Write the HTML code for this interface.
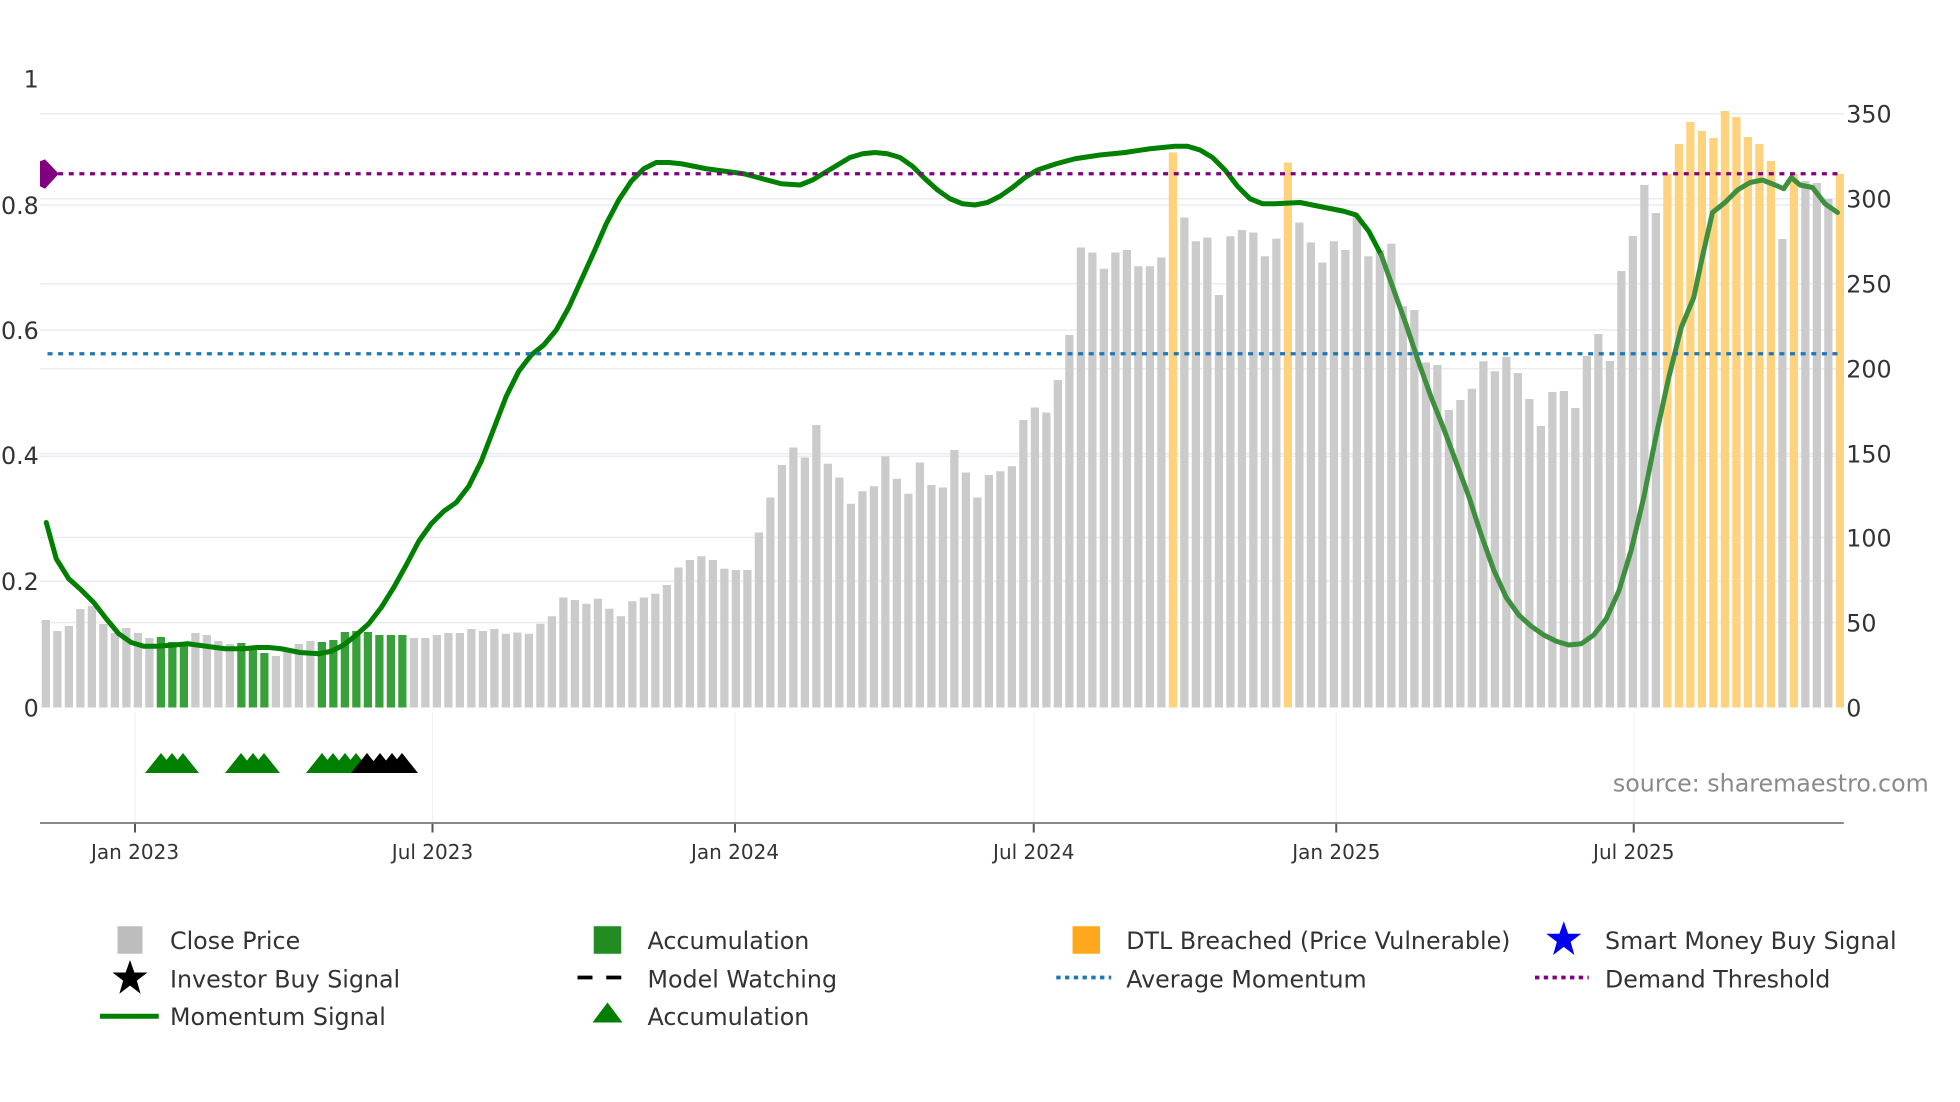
<!DOCTYPE html>
<html><head><meta charset="utf-8"><style>
html,body{margin:0;padding:0;background:#fff;}
svg{display:block;font-family:"DejaVu Sans","Liberation Sans",sans-serif;}
</style></head><body>
<svg width="1960" height="1102" viewBox="0 0 1568 881.6" xmlns="http://www.w3.org/2000/svg">
<g stroke="#e9edf3" stroke-width="1.2">
<line x1="32" x2="1475" y1="91" y2="91"/><line x1="32" x2="1475" y1="159" y2="159"/><line x1="32" x2="1475" y1="227" y2="227"/><line x1="32" x2="1475" y1="295" y2="295"/><line x1="32" x2="1475" y1="363" y2="363"/><line x1="32" x2="1475" y1="430" y2="430"/><line x1="32" x2="1475" y1="498" y2="498"/><line x1="32" x2="1475" y1="465" y2="465"/><line x1="32" x2="1475" y1="365" y2="365"/><line x1="32" x2="1475" y1="264" y2="264"/><line x1="32" x2="1475" y1="164" y2="164"/>
</g>
<g stroke="#eef0f4" stroke-width="1">
<line x1="108" x2="108" y1="570" y2="658"/><line x1="346" x2="346" y1="570" y2="658"/><line x1="588" x2="588" y1="570" y2="658"/><line x1="827" x2="827" y1="570" y2="658"/><line x1="1069" x2="1069" y1="570" y2="658"/><line x1="1307" x2="1307" y1="570" y2="658"/>
</g>
<path fill="#cbcbcb" d="M33.4 566V496h6.6V566zM42.6 566V504.8h6.6V566zM51.8 566V500.8h6.6V566zM61 566V487.2h6.6V566zM70.2 566V484.8h6.6V566zM79.4 566V499.2h6.6V566zM88.6 566V506.4h6.6V566zM97.8 566V502.4h6.6V566zM107 566V506.4h6.6V566zM116.2 566V510.4h6.6V566zM153 566V506.4h6.6V566zM162.2 566V508h6.6V566zM171.4 566V512.8h6.6V566zM180.6 566V515.2h6.6V566zM217.4 566V524.8h6.6V566zM226.6 566V521.6h6.6V566zM235.8 566V515.2h6.6V566zM245 566V512.8h6.6V566zM327.8 566V510.4h6.6V566zM337 566V510.4h6.6V566zM346.2 566V508h6.6V566zM355.4 566V506.4h6.6V566zM364.6 566V506.4h6.6V566zM373.8 566V503.2h6.6V566zM383 566V504.8h6.6V566zM392.2 566V503.2h6.6V566zM401.4 566V507h6.6V566zM410.6 566V506h6.6V566zM419.8 566V507h6.6V566zM429 566V499h6.6V566zM438.2 566V493h6.6V566zM447.4 566V478h6.6V566zM456.6 566V480h6.6V566zM465.8 566V483h6.6V566zM475 566V479h6.6V566zM484.2 566V487h6.6V566zM493.4 566V493h6.6V566zM502.6 566V481h6.6V566zM511.8 566V478h6.6V566zM521 566V475h6.6V566zM530.2 566V468h6.6V566zM539.4 566V454h6.6V566zM548.6 566V448h6.6V566zM557.8 566V445h6.6V566zM567 566V448h6.6V566zM576.2 566V455h6.6V566zM585.4 566V456h6.6V566zM594.6 566V456h6.6V566zM603.8 566V426h6.6V566zM613 566V398h6.6V566zM622.2 566V372h6.6V566zM631.4 566V358h6.6V566zM640.6 566V366h6.6V566zM649.8 566V340h6.6V566zM659 566V371h6.6V566zM668.2 566V382h6.6V566zM677.4 566V403h6.6V566zM686.6 566V393h6.6V566zM695.8 566V389h6.6V566zM705 566V365h6.6V566zM714.2 566V383h6.6V566zM723.4 566V395h6.6V566zM732.6 566V370h6.6V566zM741.8 566V388h6.6V566zM751 566V390h6.6V566zM760.2 566V360h6.6V566zM769.4 566V378h6.6V566zM778.6 566V398h6.6V566zM787.8 566V380h6.6V566zM797 566V377h6.6V566zM806.2 566V373h6.6V566zM815.4 566V336h6.6V566zM824.6 566V326h6.6V566zM833.8 566V330h6.6V566zM843 566V304h6.6V566zM852.2 566V268h6.6V566zM861.4 566V198h6.6V566zM870.6 566V202h6.6V566zM879.8 566V215h6.6V566zM889 566V202h6.6V566zM898.2 566V200h6.6V566zM907.4 566V213h6.6V566zM916.6 566V213h6.6V566zM925.8 566V206h6.6V566zM944.2 566V174h6.6V566zM953.4 566V193h6.6V566zM962.6 566V190h6.6V566zM971.8 566V236h6.6V566zM981 566V189h6.6V566zM990.2 566V184h6.6V566zM999.4 566V186h6.6V566zM1008.6 566V205h6.6V566zM1017.8 566V191h6.6V566zM1036.2 566V178h6.6V566zM1045.4 566V194h6.6V566zM1054.6 566V210h6.6V566zM1063.8 566V193h6.6V566zM1073 566V200h6.6V566zM1082.2 566V173h6.6V566zM1091.4 566V205h6.6V566zM1100.6 566V200h6.6V566zM1109.8 566V195h6.6V566zM1119 566V245h6.6V566zM1128.2 566V248h6.6V566zM1137.4 566V290h6.6V566zM1146.6 566V292h6.6V566zM1155.8 566V328h6.6V566zM1165 566V320h6.6V566zM1174.2 566V311h6.6V566zM1183.4 566V289h6.6V566zM1192.6 566V297h6.6V566zM1201.8 566V285.6h6.6V566zM1211 566V298.4h6.6V566zM1220.2 566V319.2h6.6V566zM1229.4 566V340.8h6.6V566zM1238.6 566V313.6h6.6V566zM1247.8 566V312.8h6.6V566zM1257 566V326.4h6.6V566zM1266.2 566V284.8h6.6V566zM1275.4 566V267.2h6.6V566zM1284.6 566V288.8h6.6V566zM1293.8 566V216.8h6.6V566zM1303 566V188.8h6.6V566zM1312.2 566V148h6.6V566zM1321.4 566V170.4h6.6V566zM1422.6 566V191.2h6.6V566zM1441 566V144.8h6.6V566zM1450.2 566V146.4h6.6V566zM1459.4 566V159.2h6.6V566z"/>
<path fill="#38a038" d="M125.4 566V509.6h6.6V566zM134.6 566V513.6h6.6V566zM143.8 566V515.2h6.6V566zM189.8 566V514.4h6.6V566zM199 566V520h6.6V566zM208.2 566V522.4h6.6V566zM254.2 566V513.6h6.6V566zM263.4 566V512h6.6V566zM272.6 566V505.6h6.6V566zM281.8 566V504.8h6.6V566zM291 566V505.6h6.6V566zM300.2 566V508h6.6V566zM309.4 566V508h6.6V566zM318.6 566V508h6.6V566z"/>
<path fill="#ffd27e" d="M935 566V122h6.6V566zM1027 566V130h6.6V566zM1330.6 566V139.2h6.6V566zM1339.8 566V115.2h6.6V566zM1349 566V97.6h6.6V566zM1358.2 566V104.8h6.6V566zM1367.4 566V110.4h6.6V566zM1376.6 566V88.8h6.6V566zM1385.8 566V93.6h6.6V566zM1395 566V109.6h6.6V566zM1404.2 566V115.2h6.6V566zM1413.4 566V128.8h6.6V566zM1431.8 566V139.2h6.6V566zM1468.6 566V139.2h6.6V566z"/>
<path fill="none" stroke="#008000" stroke-width="4" stroke-linejoin="round" stroke-linecap="round" d="M37,418 L45,447 L55,463 L65,472 L75,482 L85,495 L95,507 L105,514 L115,517 L125,517 L140,516 L150,515 L165,517 L180,519 L195,519 L205,518 L215,518 L225,519 L240,522 L255,523 L265,521 L275,516 L285,508 L295,499 L305,486 L315,470 L325,452 L335,433 L345,419 L355,409 L365,402 L375,389 L385,369 L395,343 L405,317 L415,297 L425,284 L435,276 L445,264 L455,246 L465,224 L475,202 L485,179 L495,160 L505,145 L515,135 L525,130 L535,130 L545,131 L555,133 L565,135 L580,137 L595,139 L610,143 L625,147 L640,148 L650,144 L660,138 L670,132 L680,126 L690,123 L700,122 L710,123 L720,126 L730,133 L740,143 L750,152 L760,159 L770,163 L780,164 L790,162 L800,157 L810,150 L820,142 L830,136 L845,131 L860,127 L880,124 L900,122 L920,119 L940,117 L950,117 L960,120 L970,126 L980,136 L990,149 L1000,159 L1010,163 L1020,163 L1040,162 L1060,166 L1075,169 L1085,172 L1095,185 L1105,204"/>
<path fill="none" stroke="#3e8f3e" stroke-width="4" stroke-linejoin="round" stroke-linecap="round" d="M1105,204 L1115,232 L1125,260 L1135,290 L1145,318 L1155,343 L1165,370 L1175,397 L1185,428 L1195,456 L1205,478 L1215,492 L1225,501 L1235,508 L1245,513 L1255,516 L1265,515 L1275,508 L1285,495 L1295,473 L1305,440 L1315,398 L1325,348 L1335,302 L1345,262 L1355,238 L1362,205 L1370,170 L1380,162 L1390,152 L1400,146 L1410,144 L1420,148 L1427,151 L1433,142 L1440,148 L1450,150 L1460,163 L1470,170"/>
<line x1="38" y1="139" x2="1472" y2="139" stroke="#800080" stroke-width="2.6" stroke-dasharray="4,4.5"/>
<line x1="38" y1="283" x2="1472" y2="283" stroke="#1f77b4" stroke-width="2.6" stroke-dasharray="4,4.5"/>
<polygon points="32,129 36,127.5 47,139 36,151 32,149" fill="#800080"/>
<g fill="#008000">
<polygon points="116,618.4 128.8,602.4 141.6,618.4"/><polygon points="124.8,618.4 137.6,602.4 150.4,618.4"/><polygon points="133.6,618.4 146.4,602.4 159.2,618.4"/>
<polygon points="180,618.4 192.8,602.4 205.6,618.4"/><polygon points="189.6,618.4 202.4,602.4 215.2,618.4"/><polygon points="198.4,618.4 211.2,602.4 224,618.4"/>
<polygon points="244.8,618.4 257.6,602.4 270.4,618.4"/><polygon points="253.6,618.4 266.4,602.4 279.2,618.4"/><polygon points="263.2,618.4 276,602.4 288.8,618.4"/><polygon points="272,618.4 284.8,602.4 297.6,618.4"/>
</g>
<g fill="#000">
<polygon points="280.8,618.4 293.6,602.4 306.4,618.4"/><polygon points="291.2,618.4 304,602.4 316.8,618.4"/><polygon points="300.8,618.4 313.6,602.4 326.4,618.4"/><polygon points="308.8,618.4 321.6,602.4 334.4,618.4"/>
</g>
<line x1="32" y1="658.4" x2="1475" y2="658.4" stroke="#888" stroke-width="1.6"/>
<g stroke="#555" stroke-width="1.6">
<line x1="108" x2="108" y1="659" y2="666"/><line x1="346" x2="346" y1="659" y2="666"/><line x1="588" x2="588" y1="659" y2="666"/><line x1="827" x2="827" y1="659" y2="666"/><line x1="1069" x2="1069" y1="659" y2="666"/><line x1="1307" x2="1307" y1="659" y2="666"/>
</g>
<g fill="#333" font-size="19" text-anchor="end">
<text x="31" y="70">1</text><text x="31" y="171">0.8</text><text x="31" y="271">0.6</text><text x="31" y="371">0.4</text><text x="31" y="472">0.2</text><text x="31" y="573">0</text>
</g>
<g fill="#333" font-size="19">
<text x="1477" y="98">350</text><text x="1477" y="166">300</text><text x="1477" y="234">250</text><text x="1477" y="302">200</text><text x="1477" y="370">150</text><text x="1477" y="437">100</text><text x="1477" y="505">50</text><text x="1477" y="573">0</text>
</g>
<g fill="#333" font-size="16" text-anchor="middle">
<text x="108" y="687">Jan 2023</text><text x="346" y="687">Jul 2023</text><text x="588" y="687">Jan 2024</text><text x="827" y="687">Jul 2024</text><text x="1069" y="687">Jan 2025</text><text x="1307" y="687">Jul 2025</text>
</g>
<text x="1543" y="633" fill="#8a8a8a" font-size="19" text-anchor="end">source: sharemaestro.com</text>
<g font-size="19" fill="#333">
<rect x="94" y="741" width="20" height="22" fill="#bdbdbd"/>
<text x="136" y="759">Close Price</text>
<polygon points="104,768 107.5,778 118,778 109.5,784.5 112.5,795 104,788.5 95.5,795 98.5,784.5 90,778 100.5,778" fill="#000"/>
<text x="136" y="790">Investor Buy Signal</text>
<line x1="80" y1="813" x2="127" y2="813" stroke="#008000" stroke-width="4"/>
<text x="136" y="820">Momentum Signal</text>
<rect x="475" y="741" width="22" height="22" fill="#228b22"/>
<text x="518" y="759">Accumulation</text>
<line x1="462" y1="782" x2="506" y2="782" stroke="#000" stroke-width="3" stroke-dasharray="12,11"/>
<text x="518" y="790">Model Watching</text>
<polygon points="486,802 498,818 474,818" fill="#008000"/>
<text x="518" y="820">Accumulation</text>
<rect x="858" y="741" width="22" height="22" fill="#ffa81e"/>
<text x="901" y="759">DTL Breached (Price Vulnerable)</text>
<line x1="845" y1="782" x2="889" y2="782" stroke="#1f77b4" stroke-width="3" stroke-dasharray="3.5,3.5"/>
<text x="901" y="790">Average Momentum</text>
<polygon points="1251,737 1254.5,747 1265,747 1256.5,753.5 1259.5,764 1251,757.5 1242.5,764 1245.5,753.5 1237,747 1247.5,747" fill="#0000ee"/>
<text x="1284" y="759">Smart Money Buy Signal</text>
<line x1="1228" y1="782" x2="1271" y2="782" stroke="#800080" stroke-width="3" stroke-dasharray="3.5,3.5"/>
<text x="1284" y="790">Demand Threshold</text>
</g>
</svg>
</body></html>
